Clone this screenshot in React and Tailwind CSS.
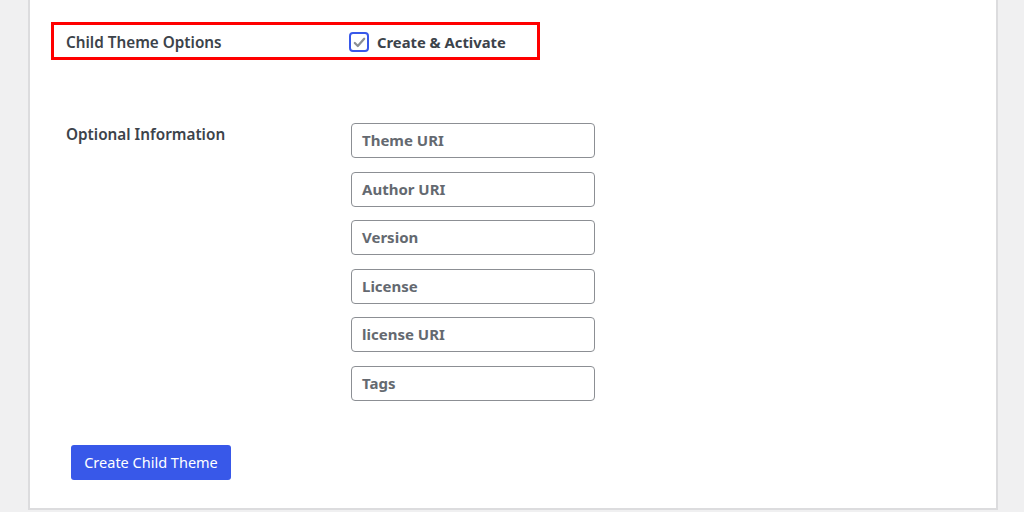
export default function App() {
  const fields = ['Theme URI', 'Author URI', 'Version', 'License', 'license URI', 'Tags'];

  return (
    <div
      className="h-[512px] w-[1024px] overflow-hidden bg-[#f0f0f1] pl-[28px]"
      style={{ fontFamily: '"Noto Sans", "Open Sans", sans-serif' }}
    >
      <div className="h-[510px] w-[970px] border-x-2 border-b-2 border-[#dcdcde] bg-white">
        <div className="ml-[21px] pt-[22px]">
          <div className="flex h-[38px] w-[489px] items-center border-[3px] border-[#ff0000] pl-[12px] pt-[2px]">
            <div className="w-[283px] text-[15.3px] font-semibold text-[#3c434a]">Child Theme Options</div>
            <label className="flex items-center gap-[8px]">
              <span className="flex h-[20px] w-[20px] items-center justify-center rounded-[4px] border-2 border-[#3858e9] bg-white">
                <svg width="15" height="15" viewBox="0 0 16 16" fill="none">
                  <path d="M3 8.5l3.2 3.2L13 4" stroke="#8c8f94" strokeWidth="2.4" strokeLinecap="round" strokeLinejoin="round" />
                </svg>
              </span>
              <span className="text-[14.8px] font-bold text-[#3c434a]">Create &amp; Activate</span>
            </label>
          </div>
        </div>

        <div className="mt-[63px] flex pl-[36px]">
          <div className="w-[285px] text-[15.3px] font-semibold text-[#3c434a]">Optional Information</div>
          <div className="flex flex-col gap-[13.5px]">
            {fields.map((f) => (
              <div
                key={f}
                className="flex h-[35px] w-[244px] items-center rounded-[4px] border border-[#8c8f94] px-[10px] text-[15px] font-bold text-[#646970]"
              >
                {f}
              </div>
            ))}
          </div>
        </div>

        <div className="mt-[44px] pl-[41px]">
          <button className="h-[35px] w-[160px] rounded-[3px] bg-[#3858e9] pt-[1px] text-[14.5px] text-white">
            Create Child Theme
          </button>
        </div>
      </div>
    </div>
  );
}
